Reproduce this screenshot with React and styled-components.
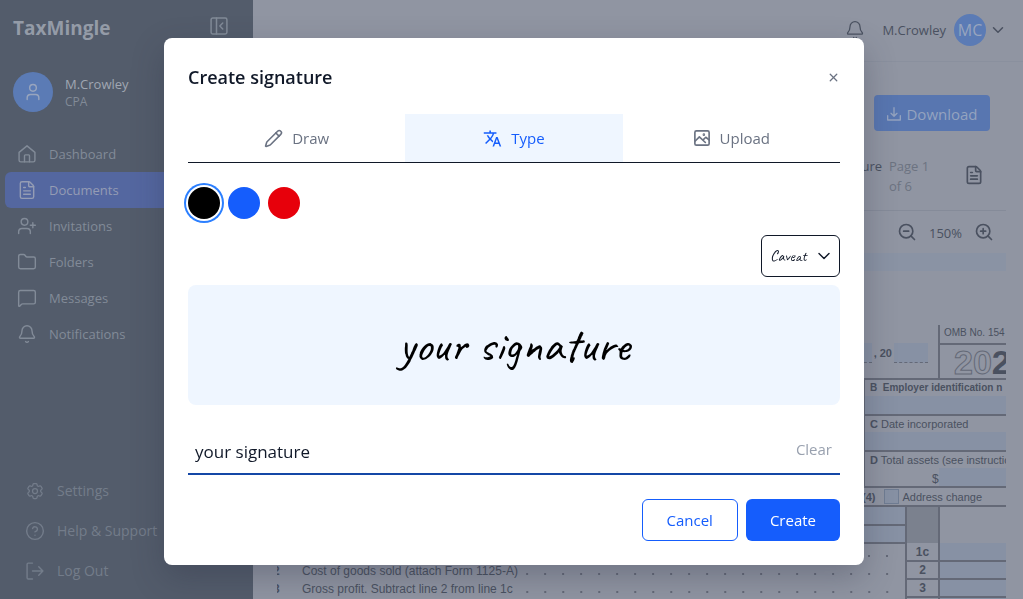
import React, { useState } from "react";
import styled, { createGlobalStyle, css } from "styled-components";
import {
  Bell, ChevronDown, CircleQuestionMark, FileText, Folder,
  MessageSquare, Pencil, User, UserPlus, X, ZoomIn, ZoomOut,
} from "lucide-react";
import { MdTranslate } from "react-icons/md";
import { HiOutlineCog6Tooth } from "react-icons/hi2";

const c = {
  page: "#9095a2",
  side: "#535c6b",
  sideText: "#828b98",
  sideMuted: "#737c8a",
  accent: "#5876b0",
  ink: "#4a5160",
  field: "#8791a4",
  rule: "#646977",
  blue: "#155dfc",
  tint: "#eff6ff",
  gray: "#6a7282",
};

const Global = createGlobalStyle`
  *, *::before, *::after { box-sizing: border-box; }
  body { margin: 0; background: ${c.page}; font-family: "Open Sans", "Noto Sans", sans-serif; font-size: 13px; line-height: 20px; overflow: hidden; }
  button, input, select { font: inherit; color: inherit; margin: 0; }
  button { background: none; border: 0; padding: 0; cursor: pointer; }
  a { color: inherit; text-decoration: none; }
  p, h1, h2 { margin: 0; }
  svg { display: block; flex: none; }
`;

/* ---------- icons ---------- */

const Stroke = ({ size = 18, width = 2, children }) => (
  <svg width={size} height={size} viewBox="0 0 24 24" fill="none" stroke="currentColor"
    strokeWidth={width} strokeLinecap="round" strokeLinejoin="round" aria-hidden="true">
    {children}
  </svg>
);

const HomeIcon = () => (
  <Stroke size={20} width={1.7}>
    <path d="M2.500 10 12 2.200 21.500 10v9.400a2 2 0 0 1-2 2h-15a2 2 0 0 1-2-2z" />
    <path d="M9 21.400V14a1 1 0 0 1 1-1h4a1 1 0 0 1 1 1v7.400" />
  </Stroke>
);

const CollapseIcon = () => (
  <Stroke size={20} width={1.8}>
    <rect x="2.500" y="2.500" width="19" height="19" rx="2" />
    <path d="M9 2.500v19M16.500 8.500 13 12l3.500 3.500" />
  </Stroke>
);

const ExitIcon = () => (
  <Stroke size={20} width={1.7}>
    <path d="M9 2.500H4a1.500 1.500 0 0 0-1.500 1.500v16A1.500 1.500 0 0 0 4 21.500h5" />
    <path d="M9 12h12.500M16.500 7l5 5-5 5" />
  </Stroke>
);

const DownloadIcon = () => (
  <Stroke size={16} width={2}>
    <path d="M12 2.500v12.500M7.500 11l4.500 4.500 4.500-4.500M2.500 14.500V21h19v-6.500" />
  </Stroke>
);

const PictureIcon = () => (
  <Stroke size={18} width={2.2}>
    <rect x="2.500" y="2.500" width="19" height="19" rx="2" />
    <path d="M3 16l5.500-5.500 8 7.500M13.500 14.500l3.500-3.500 4.500 3.500" />
    <circle cx="14.500" cy="7.500" r=".6" fill="currentColor" />
  </Stroke>
);

/* ---------- shell ---------- */

const Shell = styled.div`
  display: grid;
  grid-template-columns: 253px minmax(0, 1fr);
  height: 100vh;
`;

const Sidebar = styled.aside`
  display: flex;
  flex-direction: column;
  background: ${c.side};
  color: ${c.sideText};
`;

const Brand = styled.div`
  display: flex;
  align-items: flex-start;
  justify-content: space-between;
  height: 56px;
  padding: 14px 24px 0 13px;
  h1 { font-size: 19px; line-height: 28px; color: #949ba7; }
  button { padding-top: 2px; }
`;

const Profile = styled.div`
  display: flex;
  align-items: center;
  gap: 12px;
  padding: 16px 13px 24px;
`;

const Avatar = styled.span`
  display: grid;
  place-items: center;
  width: ${(p) => p.$size}px;
  height: ${(p) => p.$size}px;
  border-radius: 50%;
  background: #5b7bb5;
  color: #98a5be;
  font-size: 16px;
`;

const ProfileText = styled.div`
  padding-top: 2px;
  line-height: 18px;
  color: #a0a7b2;
  small { display: block; font-size: 12px; color: ${c.sideText}; }
`;

const Nav = styled.nav`
  display: flex;
  flex-direction: column;
  padding: 0 5px;
`;

const FootNav = styled(Nav)`
  margin-top: auto;
  padding: 0 5px 8px 13px;
`;

const NavLink = styled.a`
  display: flex;
  align-items: center;
  gap: 12px;
  height: ${(p) => (p.$tall ? 40 : 36)}px;
  padding: 0 12px;
  border-radius: 6px;
  font-size: ${(p) => (p.$tall ? 14 : 13)}px;
  color: ${(p) => (p.$tall ? c.sideMuted : c.sideText)};
  ${(p) => p.$active && css`background: #5467a0; color: #949cb4;`}
`;

const Main = styled.main`
  display: flex;
  flex-direction: column;
  min-width: 0;
  overflow: hidden;
  color: ${c.ink};
`;

const TopBar = styled.header`
  display: flex;
  align-items: center;
  justify-content: flex-end;
  gap: 17px;
  height: 62px;
  padding: 0 16px 2px 0;
  border-bottom: 1px solid #8a909e;
  flex: none;
`;

const UserMenu = styled.button`
  display: flex;
  align-items: center;
  gap: 3px;
  span:first-child { padding-right: 5px; }
`;

const Actions = styled.div`
  display: flex;
  justify-content: flex-end;
  padding: 33px 33px 15px 24px;
`;

const DownloadButton = styled.button`
  display: flex;
  align-items: center;
  justify-content: center;
  gap: 4px;
  width: 116px;
  height: 36px;
  padding-top: 2px;
  border-radius: 4px;
  background: ${c.accent};
  color: #94a3bf;
  font-size: 15px;
`;

const Viewer = styled.section`
  display: flex;
  flex-direction: column;
  flex: 1;
  min-height: 0;
  margin: 0 17px 0 24px;
`;

const DocBar = styled.div`
  display: flex;
  align-items: flex-start;
  justify-content: flex-end;
  height: 65px;
  padding: 10px 22px 0 0;
  border-bottom: 1px solid #858b99;
  flex: none;
`;

const PageCount = styled.span`
  width: 75px;
  padding-right: 30px;
  margin-left: 7px;
  color: #6c7381;
`;

const IconButton = styled.button`
  padding: ${(p) => p.$pad || "0"};
`;

const ZoomBar = styled.div`
  display: flex;
  align-items: center;
  justify-content: flex-end;
  gap: 12px;
  height: 42px;
  padding-right: 12px;
  flex: none;
  span { padding-top: 2px; }
`;

/* ---------- tax form ---------- */

const Sheet = styled.div`
  flex: 1;
  min-height: 0;
  overflow: hidden;
  border-top: 18px solid #8a93a4;
  font-family: "Liberation Sans", Arial, sans-serif;
  font-size: 11px;
  line-height: 16px;
  white-space: nowrap;
`;

const SheetHead = styled.div`
  display: grid;
  grid-template-columns: minmax(0, 1fr) 68px;
  height: 55px;
  margin-top: 54px;
  border-bottom: 2px solid ${c.rule};
`;

const YearEnd = styled.div`
  display: flex;
  justify-content: flex-end;
  align-items: flex-start;
  gap: 2px;
  padding: 18px 10px 0 0;
  font-weight: 700;
  line-height: 20px;
`;

const Blank = styled.span`
  width: 34px;
  height: 20px;
  background: ${c.field};
  border-bottom: 1px dashed ${c.rule};
`;

const YearBox = styled.div`
  overflow: hidden;
  border-left: 2px solid ${c.rule};
  p { padding-left: 4px; height: 20px; border-bottom: 2px solid ${c.rule}; font-size: 10px; }
`;

const Year = styled.div`
  padding-left: 14px;
  font-size: 34px;
  font-weight: 700;
  line-height: 34px;
  span { color: ${c.page}; -webkit-text-stroke: 1px ${c.rule}; }
`;

const Box = styled.div`
  width: 143px;
  height: 36px;
  margin-left: auto;
  overflow: hidden;
  padding-left: 5px;
  font-size: ${(p) => (p.$small ? 10 : 11)}px;
  border-left: 2px solid ${c.rule};
  border-bottom: 2px solid ${c.rule};
  background: linear-gradient(${c.field}, ${c.field}) right bottom / ${(p) => p.$fill || "100%"} 18px no-repeat;
`;

const Dollar = styled.div`
  padding: 3px 0 0 62px;
  font-size: 12px;
`;

const CheckRow = styled.label`
  display: flex;
  align-items: center;
  justify-content: flex-end;
  gap: 4px;
  height: 19px;
  padding-right: 24px;
  border-bottom: 2px solid ${c.rule};
  b { margin-right: 4px; }
  input { appearance: none; width: 15px; height: 15px; border: 1px solid #6f7c92; background: ${c.field}; margin: 0; }
`;

const Lines = styled.table`
  width: 100%;
  table-layout: fixed;
  border-collapse: collapse;
  font-size: 12px;
  td { height: 18px; padding: 0; overflow: hidden; }
`;

const Desc = styled.td`
  ${(p) => p.$fill && css`background: ${c.field}; border-bottom: 2px solid ${c.rule};`}
  div { display: flex; padding-top: 1px; }
  b { width: 29px; margin-left: -4px; }
`;

const Leader = styled.span`
  flex: 1;
  height: 16px;
  margin: 0 9px 0 4px;
  background: radial-gradient(circle at 9px 11px, ${c.rule} 1px, transparent 1px) right top / 18px 16px repeat-x;
`;

const NumCell = styled.td`
  border-left: 2px solid ${c.rule};
  border-right: 2px solid ${c.rule};
  text-align: center;
  font-weight: 700;
  ${(p) => (p.$shade ? css`background: #7b818e;` : css`border-bottom: 2px solid ${c.rule};`)}
`;

const Amount = styled.td`
  ${(p) => p.$fill && css`background: ${c.field}; border-bottom: 2px solid ${c.rule};`}
`;

/* ---------- dialog ---------- */

const Backdrop = styled.div`
  position: fixed;
  inset: 0;
  display: flex;
  align-items: center;
  justify-content: center;
  padding: 4px 0 0 5px;
`;

const Dialog = styled.div`
  width: 100%;
  max-width: 700px;
  padding: 24px;
  border-radius: 8px;
  background: #fff;
  color: #101828;
  box-shadow: 0 12px 32px rgba(40, 44, 62, 0.3);
`;

const DialogHead = styled.div`
  display: flex;
  align-items: center;
  justify-content: space-between;
  height: 28px;
  padding-top: 2px;
  margin-bottom: 24px;
  h2 { font-size: 18px; line-height: 28px; font-weight: 600; }
  button { color: ${c.gray}; }
`;

const Tabs = styled.div`
  display: grid;
  grid-template-columns: repeat(3, 1fr);
  border-bottom: 1px solid #101828;
`;

const Tab = styled.button`
  display: flex;
  align-items: center;
  justify-content: center;
  gap: 9px;
  height: 48px;
  font-size: 15px;
  color: ${(p) => (p.$active ? c.blue : c.gray)};
  background: ${(p) => (p.$active ? c.tint : "transparent")};
`;

const Swatches = styled.div`
  display: flex;
  gap: 8px;
  margin-top: 24px;
`;

const Swatch = styled.input`
  appearance: none;
  width: 32px;
  height: 32px;
  border-radius: 50%;
  background: ${(p) => p.$color};
  &:checked { box-shadow: 0 0 0 2px #fff, 0 0 0 4px #2b7fff; }
`;

const hand = css`
  font-family: Caveat, "Segoe Script", cursive;
`;

const FontPicker = styled.label`
  display: grid;
  align-items: center;
  width: 79px;
  margin: 16px 0 8px auto;
  select, svg { grid-area: 1 / 1; }
  svg { justify-self: end; margin-right: 6px; pointer-events: none; }
  select {
    ${hand}
    appearance: none;
    width: 100%;
    height: 42px;
    padding: 0 24px 0 8px;
    border: 1px solid #101828;
    border-radius: 6px;
    background: #fff;
    font-size: 16px;
  }
`;

const Preview = styled.div`
  ${hand}
  display: grid;
  place-items: center;
  height: 120px;
  border-radius: 8px;
  background: ${c.tint};
  color: ${(p) => p.$color};
  font-size: 48px;
  line-height: 48px;
`;

const Field = styled.div`
  display: flex;
  align-items: center;
  height: 46px;
  margin-top: 24px;
  padding: 0 8px 4px 7px;
  border-bottom: 2px solid #1447a6;
  input { flex: 1; min-width: 0; padding: 6px 0 0; border: 0; outline: 0; background: none; font-size: 17px; line-height: 24px; }
  button { font-size: 15px; color: #99a1af; }
`;

const Footer = styled.div`
  display: flex;
  justify-content: flex-end;
  gap: 8px;
  margin-top: 24px;
`;

const Button = styled.button`
  height: 42px;
  padding: 0 24px;
  border: ${(p) => (p.$primary ? 0 : 1)}px solid ${c.blue};
  border-radius: 6px;
  font-size: 15px;
  color: ${(p) => (p.$primary ? "#fff" : c.blue)};
  background: ${(p) => (p.$primary ? c.blue : "#fff")};
`;

const navItems = [
  ["Dashboard", <HomeIcon />],
  ["Documents", <FileText size={20} strokeWidth={1.7} />],
  ["Invitations", <UserPlus size={20} strokeWidth={1.7} />],
  ["Folders", <Folder size={20} strokeWidth={1.7} />],
  ["Messages", <MessageSquare size={20} strokeWidth={1.7} />],
  ["Notifications", <Bell size={20} strokeWidth={1.7} />],
];

const footItems = [
  ["Settings", <HiOutlineCog6Tooth size={20} />],
  ["Help & Support", <CircleQuestionMark size={20} strokeWidth={1.7} />],
  ["Log Out", <ExitIcon />],
];

const tabs = [
  ["Draw", <Pencil size={19} strokeWidth={2} />],
  ["Type", <MdTranslate size={19} />],
  ["Upload", <PictureIcon />],
];

const colors = [["Black", "#000"], ["Blue", "#155dfc"], ["Red", "#e7000b"]];

const TaxForm = () => (
  <Sheet>
    <SheetHead>
      <YearEnd><Blank />, 20 <Blank /></YearEnd>
      <YearBox>
        <p>OMB No. 154</p>
        <Year><span>20</span>2</Year>
      </YearBox>
    </SheetHead>
    <Box $small><b>B&nbsp; Employer identification n</b></Box>
    <Box><b>C</b> Date incorporated</Box>
    <Box $fill="67px"><b>D</b> Total assets (see instructio<Dollar>$</Dollar></Box>
    <CheckRow><b>(4)</b><input type="checkbox" /> Address change</CheckRow>
    <Lines>
      <colgroup>
        <col />
        <col style={{ width: 33 }} />
        <col style={{ width: 67 }} />
      </colgroup>
      <tbody>
        <tr><Desc $fill /><NumCell $shade /><Amount /></tr>
        <tr><Desc $fill /><NumCell $shade /><Amount /></tr>
        <tr><Desc><div><Leader /></div></Desc><NumCell>1c</NumCell><Amount $fill /></tr>
        <tr>
          <Desc><div><b>2</b>Cost of goods sold (attach Form 1125-A)<Leader /></div></Desc>
          <NumCell>2</NumCell><Amount $fill />
        </tr>
        <tr>
          <Desc><div><b>3</b>Gross profit. Subtract line 2 from line 1c<Leader /></div></Desc>
          <NumCell>3</NumCell><Amount $fill />
        </tr>
        <tr><Desc /><NumCell /><Amount $fill /></tr>
      </tbody>
    </Lines>
  </Sheet>
);

export default function App() {
  const [tab, setTab] = useState("Type");
  const [color, setColor] = useState("#000");
  const [text, setText] = useState("your signature");

  return (
    <>
      <Global />
      <Shell>
        <Sidebar>
          <Brand>
            <h1>TaxMingle</h1>
            <button aria-label="Collapse sidebar"><CollapseIcon /></button>
          </Brand>
          <Profile>
            <Avatar $size={40}><User size={20} strokeWidth={1.7} /></Avatar>
            <ProfileText>M.Crowley<small>CPA</small></ProfileText>
          </Profile>
          <Nav>
            {navItems.map(([label, icon]) => (
              <NavLink key={label} href="#" $active={label === "Documents"}>{icon}{label}</NavLink>
            ))}
          </Nav>
          <FootNav>
            {footItems.map(([label, icon]) => (
              <NavLink key={label} href="#" $tall>{icon}{label}</NavLink>
            ))}
          </FootNav>
        </Sidebar>
        <Main>
          <TopBar>
            <IconButton aria-label="Notifications"><Bell size={20} strokeWidth={1.5} /></IconButton>
            <UserMenu>
              <span>M.Crowley</span>
              <Avatar $size={32}>MC</Avatar>
              <ChevronDown size={18} />
            </UserMenu>
          </TopBar>
          <Actions>
            <DownloadButton><DownloadIcon />Download</DownloadButton>
          </Actions>
          <Viewer>
            <DocBar>
              <span>Signature</span>
              <PageCount>Page 1 of 6</PageCount>
              <IconButton aria-label="Page list" $pad="9px 0 0"><FileText size={20} /></IconButton>
            </DocBar>
            <ZoomBar>
              <IconButton aria-label="Zoom out"><ZoomOut size={20} /></IconButton>
              <span>150%</span>
              <IconButton aria-label="Zoom in"><ZoomIn size={20} /></IconButton>
            </ZoomBar>
            <TaxForm />
          </Viewer>
        </Main>
      </Shell>
      <Backdrop>
        <Dialog role="dialog" aria-modal="true" aria-labelledby="dialog-title">
          <DialogHead>
            <h2 id="dialog-title">Create signature</h2>
            <button aria-label="Close"><X size={13} strokeWidth={2.4} /></button>
          </DialogHead>
          <Tabs role="tablist">
            {tabs.map(([label, icon]) => (
              <Tab key={label} role="tab" aria-selected={tab === label} $active={tab === label} onClick={() => setTab(label)}>
                {icon}{label}
              </Tab>
            ))}
          </Tabs>
          <Swatches>
            {colors.map(([name, value]) => (
              <Swatch key={name} type="radio" name="ink" aria-label={name} $color={value}
                checked={color === value} onChange={() => setColor(value)} />
            ))}
          </Swatches>
          <FontPicker>
            <select aria-label="Font" defaultValue="Caveat"><option>Caveat</option></select>
            <ChevronDown size={20} strokeWidth={1.7} />
          </FontPicker>
          <Preview $color={color}>{text}</Preview>
          <Field>
            <input aria-label="Signature text" value={text} onChange={(e) => setText(e.target.value)} />
            <button onClick={() => setText("")}>Clear</button>
          </Field>
          <Footer>
            <Button>Cancel</Button>
            <Button $primary>Create</Button>
          </Footer>
        </Dialog>
      </Backdrop>
    </>
  );
}
